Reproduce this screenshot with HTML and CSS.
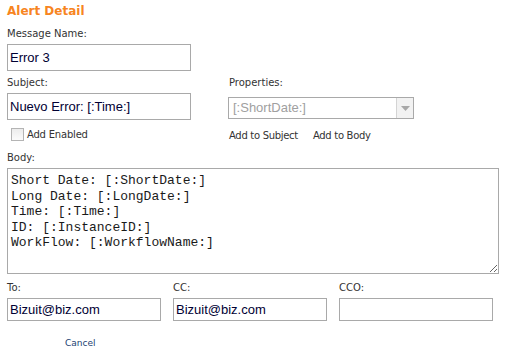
FILE: index.html
```html
<!doctype html>
<html lang="es">
    <head>
        <meta charset="UTF-8" />
        <title>Alert Detail</title>
        <link rel="stylesheet" href="styles.css">
    </head>
    <body>
        <div class="alert-form">
            <h1>Alert Detail</h1>

            <div class="label first-label">Message Name:</div>
            <input class="text-box name-box" type="text" value="Error 3" />

            <div class="subject-row">
                <div class="subject-col">
                    <div class="label">Subject:</div>
                    <input class="text-box name-box" type="text" value="Nuevo Error: [:Time:]" />
                    <label class="check">
                        <span class="check-box"></span>
                        Add Enabled
                    </label>
                </div>
                <div class="props-col">
                    <div class="label">Properties:</div>
                    <div class="select">
                        <span class="select-value">[:ShortDate:]</span>
                        <span class="select-btn">
                            <svg width="9" height="5" viewBox="0 0 9 5"><path d="M0 0h9L4.5 5z" fill="#a8a8a8"/></svg>
                        </span>
                    </div>
                    <div class="links">
                        <a href="#">Add to Subject</a>
                        <a href="#">Add to Body</a>
                    </div>
                </div>
            </div>

            <div class="label body-label">Body:</div>
            <textarea class="body-box">Short Date: [:ShortDate:]
Long Date: [:LongDate:]
Time: [:Time:]
ID: [:InstanceID:]
WorkFlow: [:WorkflowName:]</textarea>

            <div class="mail-row">
                <div class="mail-col">
                    <div class="label">To:</div>
                    <input class="text-box mail-box" type="text" value="Bizuit@biz.com" />
                </div>
                <div class="mail-col">
                    <div class="label">CC:</div>
                    <input class="text-box mail-box" type="text" value="Bizuit@biz.com" />
                </div>
                <div class="mail-col">
                    <div class="label">CCO:</div>
                    <input class="text-box mail-box" type="text" value="" />
                </div>
            </div>

            <a class="cancel" href="#">Cancel</a>
        </div>
    </body>
</html>
```

FILE: styles.css
```css
body {
    margin: 0;
    background-color: #fff;
    font-family: "DejaVu Sans", sans-serif;
    color: #333;
}

.alert-form {
    padding: 3px 7px 0 7px;
}

h1 {
    margin: 0;
    font-size: 12px;
    line-height: 16px;
    font-weight: 700;
    color: #f7851f;
}

.label {
    font-size: 10px;
    line-height: 13px;
    margin-top: 5px;
    margin-bottom: 4px;
    color: #333;
}

.first-label {
    margin-top: 8px;
}

.text-box {
    display: block;
    box-sizing: border-box;
    margin: 0;
    border: 1px solid #a9a9a9;
    padding: 0 2px;
    font-family: "Liberation Sans", Arial, sans-serif;
    font-size: 13px;
    color: #000033;
    background: #fff;
    outline: none;
}

.name-box {
    width: 184px;
    height: 27px;
}

.subject-row {
    display: flex;
}

.subject-col {
    width: 221px;
}

.check {
    display: flex;
    align-items: flex-end;
    gap: 3px;
    height: 13px;
    margin-top: 8px;
    margin-left: 4px;
    font-size: 10px;
    line-height: 12px;
    letter-spacing: -0.2px;
    color: #333;
}

.check-box {
    width: 11px;
    height: 11px;
    border: 1px solid #b4b4b4;
    background: linear-gradient(#ececec, #fbfbfb);
}

.props-col .label {
    margin-left: 1px;
}

.select {
    display: flex;
    box-sizing: border-box;
    width: 186px;
    height: 22px;
    margin-top: 8px;
    border: 1px solid #a9a9a9;
    font-family: "Liberation Sans", Arial, sans-serif;
    font-size: 13px;
    color: #a0a0a0;
}

.select-value {
    flex: 1;
    padding: 2px 4px;
    line-height: 16px;
}

.select-btn {
    display: flex;
    align-items: center;
    justify-content: center;
    width: 16px;
    border-left: 1px solid #d4d4d4;
    background: #f2f2f2;
}

.links {
    display: flex;
    gap: 15px;
    margin-top: 11px;
    margin-left: 1px;
}

.links a {
    font-size: 10px;
    line-height: 12px;
    letter-spacing: -0.3px;
    color: #333;
    text-decoration: none;
}

.body-label {
    margin-top: 9px;
}

.body-box {
    display: block;
    box-sizing: border-box;
    width: 492px;
    height: 106px;
    margin: 0;
    border: 1px solid #a9a9a9;
    padding: 4px 3px;
    font-family: "Courier New", "Liberation Mono", monospace;
    font-size: 13px;
    line-height: 15.6px;
    color: #1a1a1a;
    resize: vertical;
    outline: none;
}

.mail-row {
    display: flex;
    gap: 12px;
}

.mail-col .label {
    margin-top: 7px;
}

.mail-box {
    width: 154px;
    height: 23px;
}

.cancel {
    display: inline-block;
    margin-top: 16px;
    margin-left: 58px;
    font-size: 9px;
    line-height: 12px;
    color: #1c3f72;
    text-decoration: none;
}
```
